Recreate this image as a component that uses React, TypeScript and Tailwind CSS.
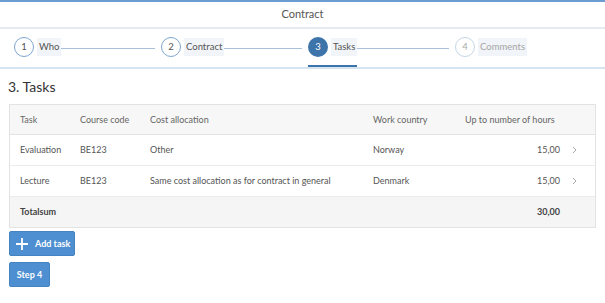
import React from 'react';

const steps = [
  { n: 1, label: 'Who', state: 'done' },
  { n: 2, label: 'Contract', state: 'done' },
  { n: 3, label: 'Tasks', state: 'active' },
  { n: 4, label: 'Comments', state: 'todo' },
];

const rows = [
  { task: 'Evaluation', code: 'BE123', cost: 'Other', country: 'Norway', hours: '15,00' },
  { task: 'Lecture', code: 'BE123', cost: 'Same cost allocation as for contract in general', country: 'Denmark', hours: '15,00' },
];

const cols = 'grid grid-cols-[60px_70px_223px_92px_95px_1fr] items-center pl-[10px]';

const Chevron = () => (
  <svg width="5" height="8" viewBox="0 0 5 8" className="ml-[12px]">
    <path d="M1 1l3 3-3 3" fill="none" stroke="#a8a8a8" strokeWidth="1" />
  </svg>
);

const App: React.FC = () => {
  return (
    <div className="w-[605px] h-[303px] bg-white text-[#333] overflow-hidden" style={{ fontFamily: 'Lato, "Liberation Sans", sans-serif' }}>
      {/* header */}
      <div className="h-[29px] border-t-2 border-[#6c9dd2] border-b-2 border-b-[#e6ebf1] flex items-center justify-center text-[11px] text-[#555]">
        Contract
      </div>

      {/* steps */}
      <div className="h-[40px] flex pl-[14px] border-b-2 border-[#d6e3f0]">
        {steps.map((s, i) => (
          <div key={s.n} className="w-[147px] flex items-center">
            <div
              className={
                'self-stretch flex items-center border-b-2 ' +
                (s.state === 'active' ? 'border-[#3d74aa]' : 'border-transparent')
              }
            >
              <div
                className={
                  'w-[20px] h-[20px] rounded-full flex items-center justify-center text-[9.5px] ' +
                  (s.state === 'active'
                    ? 'bg-[#3d74aa] text-white'
                    : s.state === 'done'
                    ? 'border border-[#7ea6cf] text-[#555]'
                    : 'border border-[#c5d6e8] text-[#aaa]')
                }
              >
                {s.n}
              </div>
              <span
                className={
                  'ml-[3px] px-[2px] py-[2px] text-[9.5px] bg-[#f1f4f8] ' +
                  (s.state === 'todo' ? 'text-[#a5a5a5]' : 'text-[#555]')
                }
              >
                {s.label}
              </span>
            </div>
            {i < steps.length - 1 && (
              <div className="flex-1 h-px bg-[#a8c1db] mr-[6px]" />
            )}
          </div>
        ))}
      </div>

      {/* title */}
      <div className="h-[35px] flex items-center pl-[8px] text-[14px] text-[#333]">3. Tasks</div>

      {/* table */}
      <div className="mx-[9px] border border-[#e3e3e3] text-[9px]">
        <div className={cols + ' h-[30px] bg-[#f7f7f7] border-b border-[#e3e3e3] text-[#666]'}>
          <span>Task</span>
          <span>Course code</span>
          <span>Cost allocation</span>
          <span>Work country</span>
          <span>Up to number of hours</span>
          <span />
        </div>
        {rows.map((r, i) => (
          <div key={i} className={cols + ' h-[31px] border-b border-[#ececec] text-[#555]'}>
            <span>{r.task}</span>
            <span>{r.code}</span>
            <span>{r.cost}</span>
            <span>{r.country}</span>
            <span className="text-right">{r.hours}</span>
            <Chevron />
          </div>
        ))}
        <div className={cols + ' h-[30px] bg-[#f5f5f5] font-bold text-[#444]'}>
          <span>Totalsum</span>
          <span />
          <span />
          <span />
          <span className="text-right">30,00</span>
          <span />
        </div>
      </div>

      {/* buttons */}
      <div className="px-[9px] pt-[3px] flex flex-col items-start gap-[6px]">
        <button className="h-[25px] w-[66px] flex items-center pl-[6px] gap-[7px] rounded-[2px] bg-[#4d8fd0] border border-[#4583c2] text-white text-[9px] font-bold">
          <svg width="12" height="12" viewBox="0 0 12 12">
            <path d="M6 0v12M0 6h12" stroke="#fff" strokeWidth="1.8" />
          </svg>
          Add task
        </button>
        <button className="h-[25px] w-[41px] flex items-center justify-center rounded-[2px] bg-[#4d8fd0] border border-[#4583c2] text-white text-[9px] font-bold">
          Step 4
        </button>
      </div>
    </div>
  );
};

export default App;
